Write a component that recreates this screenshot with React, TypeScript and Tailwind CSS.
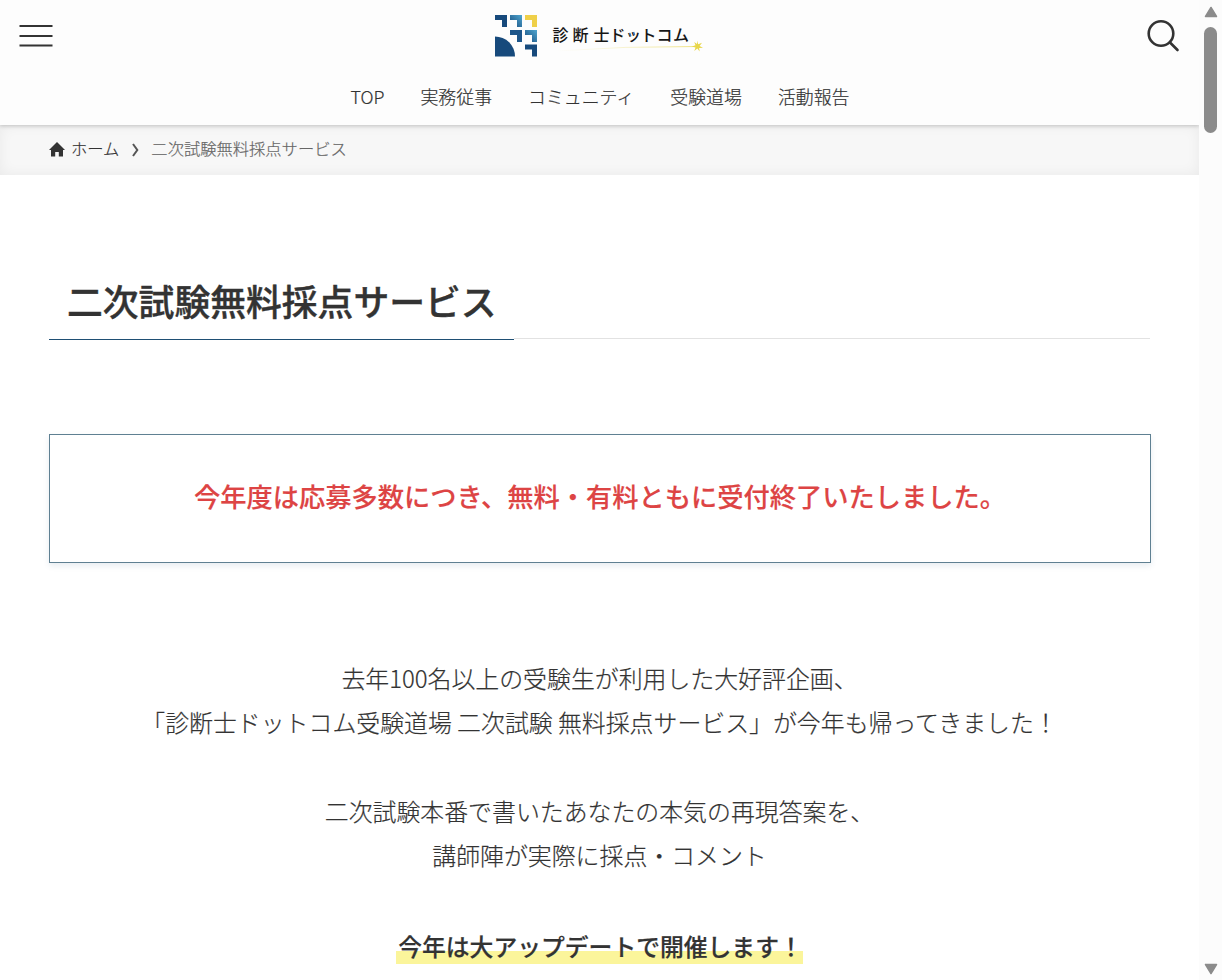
const navItems = ["TOP", "実務従事", "コミュニティ", "受験道場", "活動報告"];

function Logo() {
  return (
    <a href="#" className="flex h-[44px] w-[210px] items-start" aria-label="診断士ドットコム">
      <svg width="210" height="44" viewBox="0 0 210 44">
        <defs>
          <linearGradient id="tile" x1="0" y1="1" x2="1" y2="0">
            <stop offset="0" stopColor="#174a7c" />
            <stop offset="1" stopColor="#4fa6d0" />
          </linearGradient>
          <linearGradient id="tail" x1="0" x2="1">
            <stop offset="0" stopColor="#efe6a0" stopOpacity="0" />
            <stop offset="1" stopColor="#e8d64a" />
          </linearGradient>
        </defs>
        <path d="M0 1h12v12H7V6H0z" fill="#174a7c" />
        <path d="M15 1h12v12h-5V6H15z" fill="url(#tile)" />
        <path d="M30 1h12v12h-5V6H30z" fill="#efd049" />
        <path d="M15 16h12v12h-5v-7H15z" fill="#1d568a" />
        <path d="M30 16h12v12h-5v-7H30z" fill="url(#tile)" />
        <path d="M30 30.500h12v12h-5v-7H30z" fill="#174a7c" />
        <path d="M0 22.500a20 20 0 0 1 20 20H0z" fill="#174a7c" />
        <g
          fill="#161616"
          fontSize="16"
          fontWeight="500"
          fontFamily="'Noto Sans CJK JP', sans-serif"
        >
          <text x="57.500" y="27">診</text>
          <text x="77.500" y="27">断</text>
          <text x="98.500" y="27">士</text>
          <text x="114.500" y="27">ド</text>
          <text x="130.500" y="27" fontSize="15.500">ッ</text>
          <text x="145.500" y="27">ト</text>
          <text x="161.500" y="27">コ</text>
          <text x="178" y="27">ム</text>
        </g>
        <path d="M134.500 19l1.200 3M138.500 18l1 3" stroke="#3275bd" strokeWidth="1.600" />
        <path d="M60 37Q130 32 202 32.500" stroke="url(#tail)" strokeWidth="0.700" fill="none" />
        <path
          d="M203 27l1.200 3.800 3.800-1.500-2.400 3.200 3.400 1.800-3.900.2.600 3.500-2.400-3-3 2.500 1.200-3.500-3.700-1 3.700-1.200-1.300-3.200 2.800 1.800z"
          fill="#e8d64a"
          transform="translate(-1 -.5)"
        />
      </svg>
    </a>
  );
}

function Header() {
  return (
    <header className="relative h-[125px] bg-[#fdfdfd] shadow-[0_1px_4px_rgba(0,0,0,0.2)]">
      <div className="flex h-[72px] items-center justify-between pl-[19px] pr-[19px]">
        <button className="flex w-[150px]" aria-label="メニュー">
          <svg width="34" height="24" viewBox="0 0 34 24" stroke="#333" strokeWidth="2">
            <path d="M.5 2h33M.5 12h33M.5 21.500h33" />
          </svg>
        </button>
        <Logo />
        <button className="flex w-[150px] justify-end" aria-label="検索">
          <svg width="34" height="34" viewBox="0 0 34 34" fill="none" stroke="#333" strokeWidth="2.600">
            <circle cx="15" cy="14.500" r="12.300" />
            <path d="M24 23.500l7.500 7.500" strokeLinecap="round" />
          </svg>
        </button>
      </div>
      <nav className="flex h-[48px] items-center justify-center gap-[36px] pl-[1px] text-[17.900px] font-light [-webkit-text-stroke:0.2px_#333]">
        {navItems.map((item) => (
          <a key={item} href="#">
            {item}
          </a>
        ))}
      </nav>
    </header>
  );
}

function Breadcrumb() {
  return (
    <div className="flex h-[50px] items-center bg-[#f7f7f7] pb-[3px] pl-[49px] text-[16.300px] font-light shadow-[inset_0_0_14px_rgba(0,0,0,0.06)]">
      <svg className="mt-[2px]" width="16" height="15" viewBox="0 0 16 15" fill="#333">
        <path d="M8 0l8 8h-2v6.500H9.800V10H6.200v4.500H2V8H0z" />
      </svg>
      <a href="#" className="ml-[6px] [-webkit-text-stroke:0.2px_#333]">
        ホーム
      </a>
      <svg className="ml-[12px] mr-[11px] mt-[3px]" width="9" height="14" viewBox="0 0 9 14" fill="none" stroke="#555" strokeWidth="2">
        <path d="M2 1l4.300 6L2 13" />
      </svg>
      <span className="text-[#666] [-webkit-text-stroke:0.2px_#666]">二次試験無料採点サービス</span>
    </div>
  );
}

function Scrollbar() {
  return (
    <div className="relative flex h-full w-[23px] shrink-0 flex-col items-center bg-[#fcfcfc]">
      <svg className="mt-[6px]" width="14" height="12" viewBox="0 0 14 12">
        <path d="M7 1.500L12.500 10.500h-11z" fill="#8b8b8b" stroke="#8b8b8b" strokeWidth="1.500" strokeLinejoin="round" />
      </svg>
      <div className="mt-[9px] h-[106px] w-[13px] rounded-full bg-[#8b8b8b]" />
      <svg className="mb-[5px] mt-auto" width="14" height="12" viewBox="0 0 14 12">
        <path d="M7 10.500L1.500 1.500h11z" fill="#8b8b8b" stroke="#8b8b8b" strokeWidth="1.500" strokeLinejoin="round" />
      </svg>
    </div>
  );
}

export default function App() {
  return (
    <div className="flex h-[980px] w-[1222px] overflow-hidden bg-white font-['Noto_Sans_CJK_JP',sans-serif] text-[#333]">
      <div className="w-[1199px] shrink-0">
        <Header />
        <Breadcrumb />
        <main className="px-[49px]">
          <div className="mt-[90px] flex h-[75px] items-stretch">
            <h1 className="border-b border-[#1f4f74] pl-[18px] pr-[17px] pt-[8px] text-[35.800px] font-medium leading-[54px] [-webkit-text-stroke:0.4px_#333]">
              二次試験無料採点サービス
            </h1>
            <div className="mb-px flex-1 border-b border-[#e2e2e2]" />
          </div>

          <div className="mt-[94px] flex h-[129px] w-[1102px] items-center justify-center border border-[#5f8092] pb-[3px] shadow-[0_3px_6px_rgba(30,80,120,0.1)]">
            <p className="whitespace-nowrap text-[26.260px] font-medium text-[#dd4444] [-webkit-text-stroke:0.15px_#dd4444]">
              今年度は応募多数につき、無料・有料ともに受付終了いたしました。
            </p>
          </div>

          <div className="mt-[93px] space-y-[46px] text-center text-[23.900px] font-light leading-[43.500px] [-webkit-text-stroke:0.2px_#333]">
            <p>
              去年100名以上の受験生が利用した大好評企画、
              <br />
              「診断士ドットコム受験道場 二次試験 無料採点サービス」が今年も帰ってきました！
            </p>
            <p>
              二次試験本番で書いたあなたの本気の再現答案を、
              <br />
              講師陣が実際に採点・コメント
            </p>
            <p className="pt-[2px] font-medium">
              <span className="bg-[linear-gradient(transparent_64%,#fbf59b_64%)] pb-[1px] pl-[2px] text-[23.800px]">
                今年は大アップデートで開催します！
              </span>
            </p>
          </div>
        </main>
      </div>
      <Scrollbar />
    </div>
  );
}
